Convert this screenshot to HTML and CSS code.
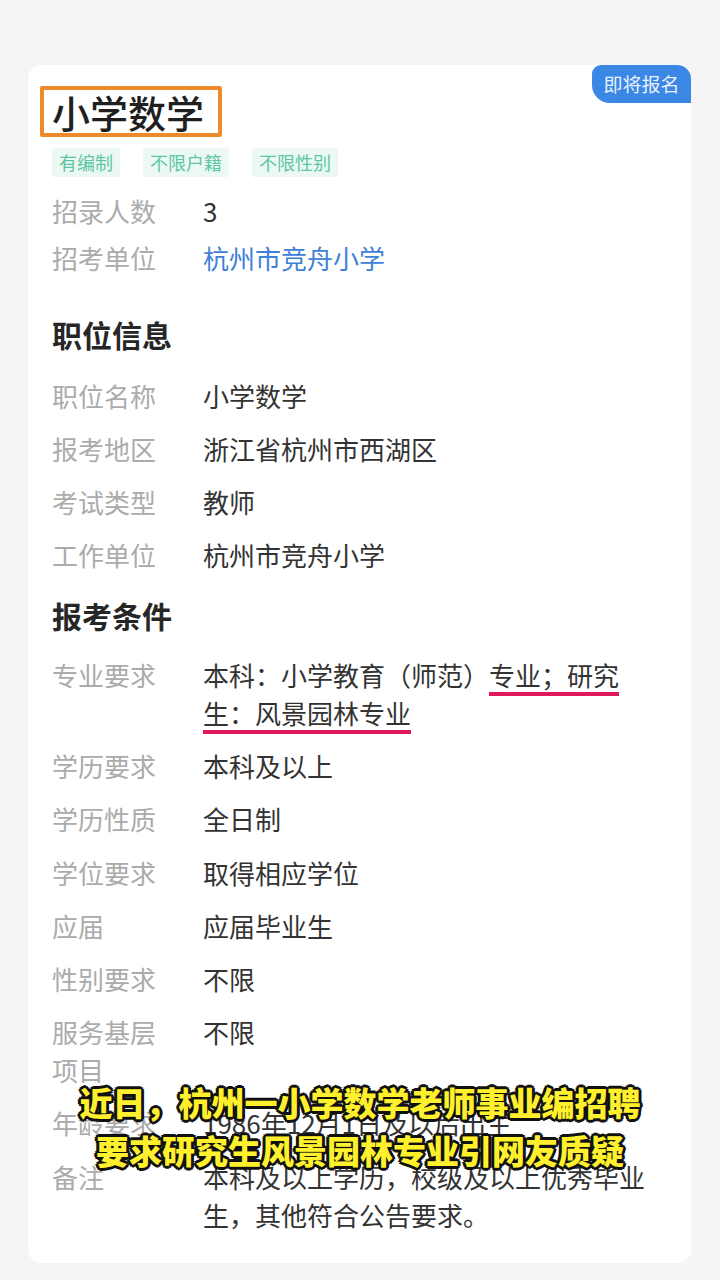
FILE: index.html
```html
<!DOCTYPE html>
<html lang="zh-CN">
<head>
<meta charset="utf-8">
<title>小学数学</title>
<link rel="stylesheet" href="styles.css">
</head>
<body>
<div class="page">
  <div class="card">
    <div class="badge">即将报名</div>
    <div class="title-box"><h1 class="title">小学数学</h1></div>
    <div class="tags">
      <span class="tag">有编制</span>
      <span class="tag">不限户籍</span>
      <span class="tag">不限性别</span>
    </div>
    <div class="rows rows-top">
      <div class="row"><div class="label">招录人数</div><div class="value">3</div></div>
      <div class="row"><div class="label">招考单位</div><div class="value link">杭州市竞舟小学</div></div>
    </div>
    <h2 class="heading heading-first">职位信息</h2>
    <div class="rows rows-job">
      <div class="row"><div class="label">职位名称</div><div class="value">小学数学</div></div>
      <div class="row"><div class="label">报考地区</div><div class="value">浙江省杭州市西湖区</div></div>
      <div class="row"><div class="label">考试类型</div><div class="value">教师</div></div>
      <div class="row"><div class="label">工作单位</div><div class="value">杭州市竞舟小学</div></div>
    </div>
    <h2 class="heading heading-second">报考条件</h2>
    <div class="rows rows-cond">
      <div class="row"><div class="label">专业要求</div><div class="value">本科：小学教育（师范）<span class="mark">专业；研究生：风景园林专业</span></div></div>
      <div class="row"><div class="label">学历要求</div><div class="value">本科及以上</div></div>
      <div class="row"><div class="label">学历性质</div><div class="value">全日制</div></div>
      <div class="row"><div class="label">学位要求</div><div class="value">取得相应学位</div></div>
      <div class="row"><div class="label">应届</div><div class="value">应届毕业生</div></div>
      <div class="row"><div class="label">性别要求</div><div class="value">不限</div></div>
      <div class="row"><div class="label">服务基层项目</div><div class="value">不限</div></div>
      <div class="row"><div class="label">年龄要求</div><div class="value">1986年12月1日及以后出生</div></div>
      <div class="row"><div class="label">备注</div><div class="value">本科及以上学历，校级及以上优秀毕业生，其他符合公告要求。</div></div>
    </div>
  </div>
  <div class="caption">
    <div>近日，杭州一小学数学老师事业编招聘</div>
    <div>要求研究生风景园林专业引网友质疑</div>
  </div>
</div>
</body>
</html>
```

FILE: styles.css
```css
* { box-sizing: border-box; }
html, body { margin: 0; padding: 0; }
body {
  background: #f5f5f5;
  font-family: "Noto Sans CJK SC", "Noto Sans", sans-serif;
  width: 720px;
  height: 1280px;
  overflow: hidden;
}
.page {
  position: relative;
  padding: 65px 29px 17px 28px;
}
.card {
  position: relative;
  background: #ffffff;
  border-radius: 14px;
  padding: 21px 24px 29px 24px;
}
.badge {
  position: absolute;
  top: 0;
  right: 0;
  width: 99px;
  height: 38px;
  background: #3b87e6;
  color: #e9f1fd;
  font-size: 19px;
  line-height: 38px;
  text-align: center;
  border-radius: 9px 14px 0 18px;
}
.title-box {
  display: inline-block;
  margin-left: -12px;
  border: 4px solid #ec8a2c;
  border-radius: 2px;
  padding: 0 14px 0 8px;
}
.title {
  margin: 0;
  font-size: 38px;
  line-height: 43px;
  font-weight: 500;
  color: #1f1f1f;
}
.tags {
  display: flex;
  gap: 23px;
  margin-top: 11px;
}
.tag {
  background: #ecf8f4;
  color: #5cc6a2;
  font-size: 18px;
  line-height: 29px;
  padding: 0 7px;
  border-radius: 2px;
}
.rows {
  display: flex;
  flex-direction: column;
}
.rows-top { margin-top: 15px; gap: 9px; }
.rows-job { margin-top: 23px; gap: 15px; }
.rows-cond { margin-top: 21px; gap: 15.2px; }
.row {
  display: flex;
  font-size: 26px;
  line-height: 38px;
}
.label {
  flex: 0 0 110px;
  margin-right: 41px;
  color: #ababab;
}
.value {
  flex: 1;
  color: #333333;
}
.value.link { color: #3f80d8; }
.mark {
  text-decoration: underline;
  text-decoration-color: #e0195f;
  text-decoration-thickness: 4px;
  text-underline-offset: 6px;
  text-decoration-skip-ink: none;
}
.heading {
  margin: 0;
  font-size: 30px;
  line-height: 40px;
  font-weight: 700;
  color: #262626;
}
.heading-first { margin-top: 37px; }
.heading-second { margin-top: 21px; }
.caption {
  position: absolute;
  left: 0;
  right: 0;
  top: 1078px;
  text-align: center;
  font-size: 33px;
  line-height: 48px;
  font-weight: 900;
  color: #fff02e;
  letter-spacing: 0;
  text-shadow:
    2px 0 0 #111, -2px 0 0 #111, 0 2px 0 #111, 0 -2px 0 #111,
    2px 2px 0 #111, -2px -2px 0 #111, 2px -2px 0 #111, -2px 2px 0 #111,
    3px 0 0 #111, -3px 0 0 #111, 0 3px 0 #111, 0 -3px 0 #111;
}
```
